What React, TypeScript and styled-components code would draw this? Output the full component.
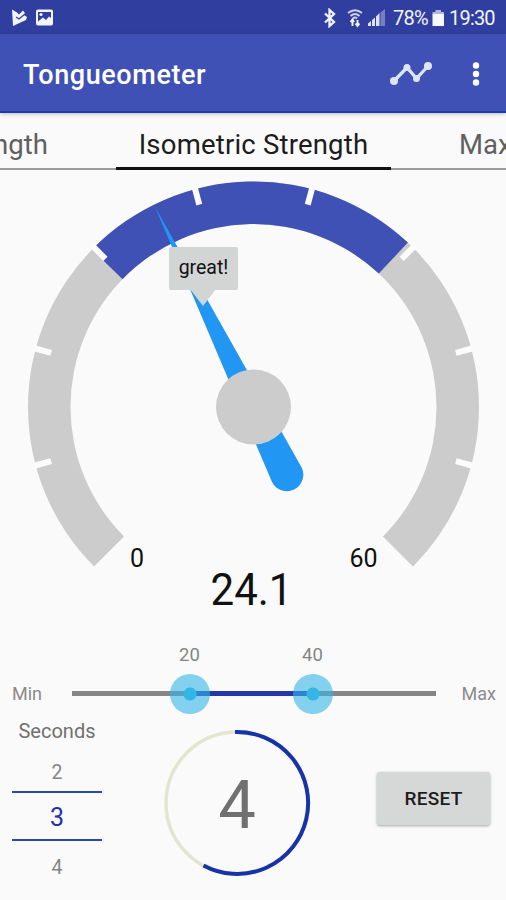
import React from 'react';
import styled, { createGlobalStyle } from 'styled-components';

const GlobalStyle = createGlobalStyle`
  * { box-sizing: border-box; }
  body { margin: 0; background: #fafafa; font-family: Roboto, sans-serif; }
`;

const Screen = styled.main`
  width: 506px;
  height: 900px;
  display: flex;
  flex-direction: column;
  overflow: hidden;
  background: #fafafa;
`;

const StatusBar = styled.div`
  flex: none;
  height: 34px;
  padding: 1px 10px 0 12px;
  display: flex;
  align-items: center;
  justify-content: space-between;
  background: #303f9f;
  color: #f2f4ff;
`;

const StatusGroup = styled.div<{ $gap: number }>`
  display: flex;
  align-items: center;
  gap: ${(p) => p.$gap}px;
`;

const StatusText = styled.span<{ $width: number }>`
  width: ${(p) => p.$width}px;
  font-size: 20px;
  line-height: 34px;
  letter-spacing: -0.8px;
  white-space: nowrap;
`;

const AppBar = styled.header`
  flex: none;
  height: 79px;
  padding: 2px 20px 0 23px;
  display: flex;
  align-items: center;
  background: #3f51b5;
  border-bottom: 2px solid #1d3aa6;
  box-shadow: 0 1px 4px rgba(0, 0, 0, 0.25);
  z-index: 1;
`;

const Title = styled.h1`
  margin: 2px auto 0 0;
  font-size: 27px;
  font-weight: 500;
  letter-spacing: 0.6px;
  color: #fff;
`;

const Tabs = styled.nav`
  flex: none;
  height: 58px;
  padding-bottom: 1px;
  display: grid;
  grid-template-columns: 116px 275px 115px;
`;

const Tab = styled.div<{ $active?: boolean; $align: 'flex-start' | 'center' | 'flex-end' }>`
  display: flex;
  align-items: flex-end;
  justify-content: ${(p) => p.$align};
  overflow: hidden;
  white-space: nowrap;
  font-size: 27.5px;
  line-height: 32px;
  letter-spacing: ${(p) => (p.$active ? 0.2 : 0)}px;
  padding-bottom: ${(p) => (p.$active ? 6 : 7)}px;
  color: ${(p) => (p.$active ? '#1c1c1c' : '#606060')};
  border-bottom: ${(p) => (p.$active ? '3px solid #111' : '2px solid #9c9c9c')};
`;

const TabLabel = styled.span<{ $inset?: number }>`
  flex: none;
  margin: 0 ${(p) => p.$inset ?? 0}px;
`;

const GaugePanel = styled.section`
  flex: none;
  position: relative;
  height: 464px;
`;

const GaugeDrawing = styled.svg`
  display: block;
`;

const Bubble = styled.div`
  position: absolute;
  left: 169px;
  top: 76px;
  width: 69px;
  height: 43px;
  border-radius: 2px;
  background: #d3d5d4;
  color: #111;
  font-size: 19.5px;
  line-height: 42px;
  text-align: center;
  &::after {
    content: '';
    position: absolute;
    left: 21px;
    top: 42px;
    border: 13px solid transparent;
    border-top: 17px solid #d3d5d4;
    border-bottom: 0;
  }
`;

const RangeRow = styled.section`
  flex: none;
  height: 83px;
  display: grid;
  grid-template-columns: 72px 364px 70px;
`;

const RangeEnd = styled.span<{ $right?: boolean }>`
  padding: 48px ${(p) => (p.$right ? 10 : 0)}px 0 12px;
  text-align: ${(p) => (p.$right ? 'right' : 'left')};
  font-size: 18px;
  line-height: 22px;
  color: #8a8a8a;
`;

const Track = styled.div`
  position: relative;
  height: 5px;
  margin-top: 56px;
  background: linear-gradient(90deg, #858585 117px, #2438aa 117px 240px, #858585 240px);
`;

const Thumb = styled.div<{ $x: number }>`
  position: absolute;
  left: ${(p) => p.$x - 20}px;
  top: -17.5px;
  width: 40px;
  height: 40px;
  border-radius: 50%;
  background: radial-gradient(circle, #33b5e5 6px, rgba(51, 181, 229, 0.6) 7px);
`;

const ThumbValue = styled.span`
  position: absolute;
  left: 0;
  top: -30px;
  width: 40px;
  text-align: center;
  font-size: 18.5px;
  line-height: 22px;
  color: #858585;
`;

const Controls = styled.section`
  flex: 1;
  display: flex;
  align-items: flex-start;
`;

const Picker = styled.div`
  width: 90px;
  margin-left: 12px;
  display: flex;
  flex-direction: column;
  align-items: center;
`;

const PickerLabel = styled.span`
  height: 28px;
  font-size: 20px;
  line-height: 26px;
  color: #707070;
`;

const PickerItem = styled.span<{ $selected?: boolean }>`
  width: 90px;
  height: ${(p) => (p.$selected ? 50 : 45)}px;
  line-height: ${(p) => (p.$selected ? 50 : 54)}px;
  text-align: center;
  font-size: ${(p) => (p.$selected ? 25 : 19.5)}px;
  color: ${(p) => (p.$selected ? '#2330ad' : '#858585')};
  border: solid #2a46b4;
  border-width: ${(p) => (p.$selected ? '2px 0' : '0')};
`;

const Timer = styled.svg`
  margin: 8px 0 0 58px;
`;

const ResetButton = styled.button`
  margin: 54px 0 0 63px;
  width: 113px;
  height: 53px;
  padding: 0;
  border: 0;
  border-radius: 3px;
  background: #d6d7d7;
  box-shadow: 0 1px 3px rgba(0, 0, 0, 0.35);
  font: 500 19px Roboto, sans-serif;
  letter-spacing: 0.3px;
  color: #1c1c1c;
`;

const CX = 253.5;
const CY = 236;
const OUTER = 225.5;
const INNER = 183;

const point = (deg: number, r: number) => {
  const a = (deg * Math.PI) / 180;
  return `${CX + r * Math.cos(a)} ${CY + r * Math.sin(a)}`;
};

const band = (from: number, to: number) => {
  const large = to - from > 180 ? 1 : 0;
  return `M${point(from, OUTER)}A${OUTER} ${OUTER} 0 ${large} 1 ${point(to, OUTER)}L${point(to, INNER)}A${INNER} ${INNER} 0 ${large} 0 ${point(from, INNER)}Z`;
};

const tickAngles = [165, 195, 225, 255, 285, 315, 345, 375];

function Gauge() {
  return (
    <GaugePanel>
      <GaugeDrawing width="506" height="464" viewBox="0 0 506 464">
        <path d={band(135, 405)} fill="#ccc" />
        <path d={band(224.3, 313.2)} fill="#3f51b5" />
        {tickAngles.map((a) => (
          <path
            key={a}
            d={`M${point(a, 227)}L${point(a, 209.5)}`}
            stroke="#fcfcfc"
            strokeWidth="6"
          />
        ))}
        <g transform={`rotate(-26.2 ${CX} ${CY})`} fill="#2196f3">
          <path d="M253.5 13L270 311.5A16.5 16.5 0 0 1 237 311.5Z" />
        </g>
        <circle cx={CX} cy={CY} r="37.5" fill="#ccc" />
        <g fill="#111" textAnchor="middle">
          <text x="137" y="396" fontSize="25">0</text>
          <text x="363.5" y="396" fontSize="25">60</text>
          <text x="251.5" y="434" fontSize="45" textLength="82" lengthAdjust="spacingAndGlyphs">24.1</text>
        </g>
      </GaugeDrawing>
      <Bubble>great!</Bubble>
    </GaugePanel>
  );
}

function NotificationIcons() {
  return (
    <svg width="44" height="20" viewBox="0 0 44 20" fill="#f2f4ff">
      <path d="M0 1.5L5 4.5L7 6.5L11 2.5L13 5L12 7L15 9L14 12L1 18Z" />
      <path d="M4 9L7 11L13 6" fill="none" stroke="#303f9f" strokeWidth="1.3" />
      <path
        fillRule="evenodd"
        d="M26 1.5H39Q41 1.5 41 3.5V15.5Q41 17.5 39 17.5H26Q24 17.5 24 15.5V3.5Q24 1.5 26 1.5ZM26 4V13.5L31 9.5L34 12L37 8.5L39 10V4Z"
      />
      <circle cx="29" cy="6.5" r="1.6" />
    </svg>
  );
}

function SignalIcons() {
  return (
    <svg width="64" height="20" viewBox="0 0 64 20" fill="none" stroke="#f2f4ff">
      <path d="M2 5.5L11 14L6.5 18V2L11 6L2 14.5" strokeWidth="2.3" />
      <g strokeWidth="1.9">
        <path d="M25 5Q32 -.5 39 5M27.5 8Q32 4 36.5 8M30 10.5Q32 8.5 34 10.5" opacity=".8" />
        <path d="M29.5 18V12M27.5 14L29.5 11.5L31 14M34.5 12V18M32.5 15.5L34.5 18L36.5 15.5" />
      </g>
      <g stroke="none" fill="#dfe2f6">
        <path d="M45 18V15.5L48 13V18ZM49 18V12L52 9.5V18ZM53 18V8.5L56.5 5V18Z" />
        <path d="M57.5 18V4.5L62 1V18Z" opacity=".4" />
      </g>
    </svg>
  );
}

function BatteryIcon() {
  return (
    <svg width="13" height="18" viewBox="0 0 13 18" fill="#f6f7ff">
      <path d="M3.5 1H9V3H12V5.5H.5V3H3.5Z" opacity=".65" />
      <path d="M.5 5H12V17H.5Z" />
    </svg>
  );
}

function ChartIcon() {
  return (
    <svg width="44" height="26" viewBox="0 0 44 26" fill="#dbe5f5">
      <path d="M6 20L19 6.5L28.5 17.5L40 5" fill="none" stroke="#dbe5f5" strokeWidth="3.3" />
      <circle cx="6" cy="20" r="4" />
      <circle cx="19" cy="6.5" r="3.5" />
      <circle cx="28.5" cy="17.5" r="3.5" />
      <circle cx="40" cy="5" r="4" />
    </svg>
  );
}

const OverflowIcon = styled.svg`
  margin-left: 34px;
`;

export default function App() {
  return (
    <Screen>
      <GlobalStyle />
      <StatusBar>
        <NotificationIcons />
        <StatusGroup $gap={6}>
          <SignalIcons />
          <StatusGroup $gap={4}>
            <StatusText $width={35}>78%</StatusText>
            <BatteryIcon />
            <StatusText $width={47}>19:30</StatusText>
          </StatusGroup>
        </StatusGroup>
      </StatusBar>
      <AppBar>
        <Title>Tongueometer</Title>
        <ChartIcon />
        <OverflowIcon width="20" height="26" viewBox="0 0 20 26" fill="#fff">
          <circle cx="10" cy="4.5" r="3.2" />
          <circle cx="10" cy="13" r="3.2" />
          <circle cx="10" cy="21.5" r="3.2" />
        </OverflowIcon>
      </AppBar>
      <Tabs>
        <Tab $align="flex-start"><TabLabel $inset={-7}>ngth</TabLabel></Tab>
        <Tab $align="center" $active><TabLabel>Isometric Strength</TabLabel></Tab>
        <Tab $align="flex-start"><TabLabel $inset={68}>Max</TabLabel></Tab>
      </Tabs>
      <Gauge />
      <RangeRow>
        <RangeEnd>Min</RangeEnd>
        <Track>
          <Thumb $x={117.5}><ThumbValue>20</ThumbValue></Thumb>
          <Thumb $x={240.5}><ThumbValue>40</ThumbValue></Thumb>
        </Track>
        <RangeEnd $right>Max</RangeEnd>
      </RangeRow>
      <Controls>
        <Picker>
          <PickerLabel>Seconds</PickerLabel>
          <PickerItem>2</PickerItem>
          <PickerItem $selected>3</PickerItem>
          <PickerItem>4</PickerItem>
        </Picker>
        <Timer width="154" height="154" viewBox="0 0 154 154" fill="none">
          <circle cx="77" cy="77" r="71" stroke="#e3e5cf" strokeWidth="3.5" />
          <path d="M75 6A71 71 0 1 1 43.5 139.5" stroke="#1733a8" strokeWidth="4" />
          <text x="77" y="102" fontSize="67" textAnchor="middle" fill="#707070">4</text>
        </Timer>
        <ResetButton>RESET</ResetButton>
      </Controls>
    </Screen>
  );
}
